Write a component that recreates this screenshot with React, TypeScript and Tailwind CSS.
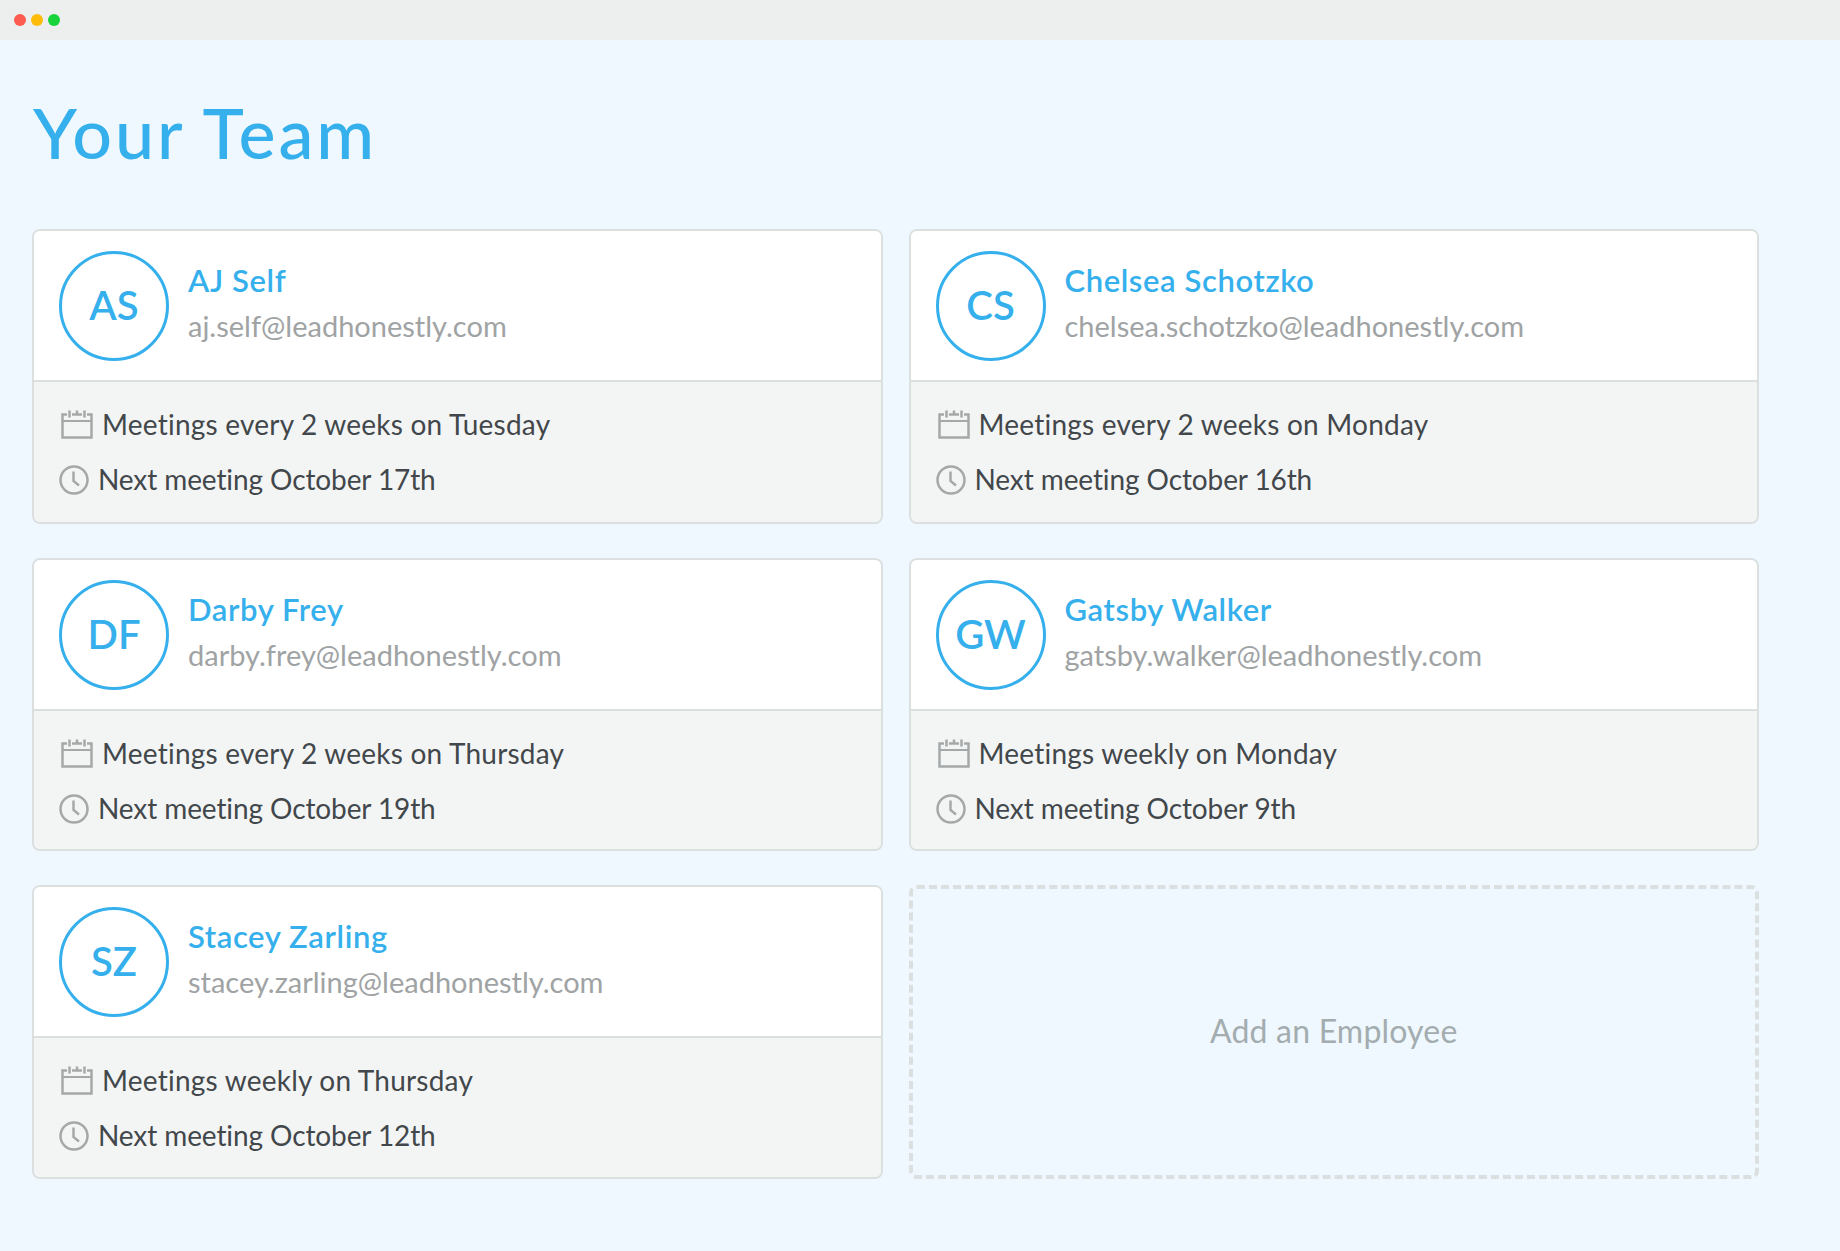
const employees = [
  { initials: "AS", name: "AJ Self", email: "aj.self@leadhonestly.com", schedule: "Meetings every 2 weeks on Tuesday", next: "Next meeting October 17th" },
  { initials: "CS", name: "Chelsea Schotzko", email: "chelsea.schotzko@leadhonestly.com", schedule: "Meetings every 2 weeks on Monday", next: "Next meeting October 16th" },
  { initials: "DF", name: "Darby Frey", email: "darby.frey@leadhonestly.com", schedule: "Meetings every 2 weeks on Thursday", next: "Next meeting October 19th" },
  { initials: "GW", name: "Gatsby Walker", email: "gatsby.walker@leadhonestly.com", schedule: "Meetings weekly on Monday", next: "Next meeting October 9th" },
  { initials: "SZ", name: "Stacey Zarling", email: "stacey.zarling@leadhonestly.com", schedule: "Meetings weekly on Thursday", next: "Next meeting October 12th" },
];

function CalendarIcon() {
  return (
    <svg viewBox="0 0 32 29" className="h-[29px] w-[32px] shrink-0" fill="none" stroke="#a5a8a9" aria-hidden>
      <path d="M6 4.5H1.5V27.5H30.5V4.5H26" strokeWidth="2.5" />
      <path d="M1.5 11H30.5" strokeWidth="2" />
      <path d="M11 4.5H21" strokeWidth="2.5" />
      <path d="M8.5 0.5V7.5M16 0.5V5M23.5 0.5V7.5" strokeWidth="2.5" />
    </svg>
  );
}

function ClockIcon() {
  return (
    <svg viewBox="0 0 30 30" className="h-[30px] w-[30px] shrink-0" fill="none" stroke="#a5a8a9" aria-hidden>
      <circle cx="15" cy="15" r="13.5" strokeWidth="2.5" />
      <path d="M14.5 6.5V16L20 20.5" strokeWidth="2.5" />
    </svg>
  );
}

function EmployeeCard({ employee }: { employee: (typeof employees)[number] }) {
  return (
    <div className="flex flex-col overflow-hidden rounded-[8px] border-2 border-[#dcdfe0]">
      <div className="flex h-[151px] items-center gap-[19px] border-b-2 border-[#dcdfe0] bg-white pl-[25px]">
        <div className="flex h-[110px] w-[110px] items-center justify-center rounded-full border-[3px] border-[#35b0ec] pb-[2px] text-[40px] font-semibold text-[#35b0ec]">
          {employee.initials}
        </div>
        <div className="flex flex-col gap-[8px] pb-[6px]">
          <div className="text-[31px] font-semibold leading-[38px] tracking-[0.6px] text-[#35b0ec]">{employee.name}</div>
          <div className="text-[29px] leading-[38px] text-[#a0a3a4]">{employee.email}</div>
        </div>
      </div>
      <div className="flex flex-1 flex-col gap-[20px] bg-[#f3f5f5] pl-[25px] pt-[25px] text-[28px] leading-[35px] text-[#42474b]">
        <div className="flex items-center gap-[9px] pl-[2px]">
          <CalendarIcon />
          <span className="tracking-[0.22px]">{employee.schedule}</span>
        </div>
        <div className="flex items-center gap-[9px]">
          <ClockIcon />
          <span className="tracking-[-0.1px]">{employee.next}</span>
        </div>
      </div>
    </div>
  );
}

export default function App() {
  return (
    <div className="min-h-[1251px] bg-[#eff8fe] font-['Lato',sans-serif]">
      <div className="flex h-[40px] items-center gap-[5px] bg-[#edefef] pl-[14px]">
        <span className="h-[12px] w-[12px] rounded-full bg-[#fc5b50]" />
        <span className="h-[12px] w-[12px] rounded-full bg-[#fdbc0a]" />
        <span className="h-[12px] w-[12px] rounded-full bg-[#18d33a]" />
      </div>
      <div className="w-[1759px] pl-[32px] pt-[52px]">
        <h1 className="h-[137px] pl-[1px] text-[70px] font-medium leading-[80px] tracking-[2.9px] text-[#35b0ec]">Your Team</h1>
        <div className="grid grid-cols-2 grid-rows-[295px_293px_294px] gap-x-[26px] gap-y-[34px]">
          {employees.map((employee) => (
            <EmployeeCard key={employee.email} employee={employee} />
          ))}
          <div className="flex items-center justify-center rounded-[8px] border-4 border-dashed border-[#dcdfe0] pb-[2px] text-[32px] tracking-[0.2px] text-[#a3acae]">
            Add an Employee
          </div>
        </div>
      </div>
    </div>
  );
}
